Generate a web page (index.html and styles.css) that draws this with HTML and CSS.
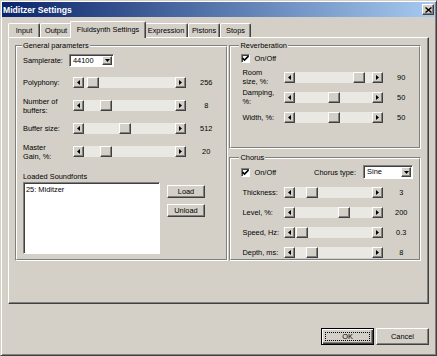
FILE: index.html
```html
<!DOCTYPE html>
<html>
<head>
<meta charset="utf-8">
<link rel="stylesheet" href="styles.css">
</head>
<body>
<div class="window">
  <div class="titlebar">
    <span class="title">Miditzer Settings</span>
    <span class="close-btn"><svg width="7" height="6" viewBox="0 0 7 6"><path d="M0.5 0.5 L6.5 5.5 M6.5 0.5 L0.5 5.5" stroke="#000" stroke-width="1.4"/></svg></span>
  </div>
  <div class="body">
    <div class="tabs">
      <div class="tab w-input">Input</div>
      <div class="tab w-output">Output</div>
      <div class="tab active w-fluid">Fluidsynth Settings</div>
      <div class="tab w-expr">Expression</div>
      <div class="tab w-pist">Pistons</div>
      <div class="tab w-stops">Stops</div>
    </div>
    <div class="panel">
      <div class="group gen">
        <div class="group-in">
          <div class="group-title t-gen">General parameters</div>
          <div class="gen-body">
            <div class="row first">
              <div class="lbl-sr">Samplerate:</div>
              <div class="combo sr-combo"><span class="combo-text">44100</span><span class="combo-btn"><svg width="5" height="3" viewBox="0 0 5 3"><polygon points="0,0 5,0 2.5,3" fill="#000"/></svg></span></div>
            </div>
            <div class="row">
              <div class="lbl">Polyphony:</div>
              <div class="slider"><span class="sb-btn"><svg width="3" height="5" viewBox="0 0 3 5"><polygon points="3,0 0,2.5 3,5" fill="#000"/></svg></span><span class="track"><span class="thumb" style="margin-left:3px"></span></span><span class="sb-btn"><svg width="3" height="5" viewBox="0 0 3 5"><polygon points="0,0 3,2.5 0,5" fill="#000"/></svg></span></div>
              <div class="val">256</div>
            </div>
            <div class="row">
              <div class="lbl">Number of<br>buffers:</div>
              <div class="slider"><span class="sb-btn"><svg width="3" height="5" viewBox="0 0 3 5"><polygon points="3,0 0,2.5 3,5" fill="#000"/></svg></span><span class="track"><span class="thumb" style="margin-left:16px"></span></span><span class="sb-btn"><svg width="3" height="5" viewBox="0 0 3 5"><polygon points="0,0 3,2.5 0,5" fill="#000"/></svg></span></div>
              <div class="val">8</div>
            </div>
            <div class="row">
              <div class="lbl">Buffer size:</div>
              <div class="slider"><span class="sb-btn"><svg width="3" height="5" viewBox="0 0 3 5"><polygon points="3,0 0,2.5 3,5" fill="#000"/></svg></span><span class="track"><span class="thumb" style="margin-left:35px"></span></span><span class="sb-btn"><svg width="3" height="5" viewBox="0 0 3 5"><polygon points="0,0 3,2.5 0,5" fill="#000"/></svg></span></div>
              <div class="val">512</div>
            </div>
            <div class="row">
              <div class="lbl">Master<br>Gain, %:</div>
              <div class="slider"><span class="sb-btn"><svg width="3" height="5" viewBox="0 0 3 5"><polygon points="3,0 0,2.5 3,5" fill="#000"/></svg></span><span class="track"><span class="thumb" style="margin-left:16px"></span></span><span class="sb-btn"><svg width="3" height="5" viewBox="0 0 3 5"><polygon points="0,0 3,2.5 0,5" fill="#000"/></svg></span></div>
              <div class="val">20</div>
            </div>
            <div class="sf-label">Loaded Soundfonts</div>
            <div class="sf-row">
              <div class="listbox"><div class="list-item">25: Miditzer</div></div>
              <div class="sf-buttons">
                <div class="btn small">Load</div>
                <div class="btn small">Unload</div>
              </div>
            </div>
          </div>
        </div>
      </div>
      <div class="right-col">
        <div class="group side">
          <div class="group-in">
            <div class="group-title t-side">Reverberation</div>
            <div class="side-body">
              <div class="row check-row rev-check">
                <span class="checkbox"><svg width="7" height="7" viewBox="0 0 7 7"><path d="M0.5 3 L2.5 5 L6.5 1" stroke="#000" stroke-width="1.6" fill="none"/></svg></span>
                <span class="check-label">On/Off</span>
              </div>
              <div class="row srow">
                <div class="slbl">Room<br>size, %:</div>
                <div class="slider sslider"><span class="sb-btn"><svg width="3" height="5" viewBox="0 0 3 5"><polygon points="3,0 0,2.5 3,5" fill="#000"/></svg></span><span class="track"><span class="thumb" style="margin-left:58px"></span></span><span class="sb-btn"><svg width="3" height="5" viewBox="0 0 3 5"><polygon points="0,0 3,2.5 0,5" fill="#000"/></svg></span></div>
                <div class="val">90</div>
              </div>
              <div class="row srow">
                <div class="slbl">Damping,<br>%:</div>
                <div class="slider sslider"><span class="sb-btn"><svg width="3" height="5" viewBox="0 0 3 5"><polygon points="3,0 0,2.5 3,5" fill="#000"/></svg></span><span class="track"><span class="thumb" style="margin-left:33px"></span></span><span class="sb-btn"><svg width="3" height="5" viewBox="0 0 3 5"><polygon points="0,0 3,2.5 0,5" fill="#000"/></svg></span></div>
                <div class="val">50</div>
              </div>
              <div class="row srow">
                <div class="slbl">Width, %:</div>
                <div class="slider sslider"><span class="sb-btn"><svg width="3" height="5" viewBox="0 0 3 5"><polygon points="3,0 0,2.5 3,5" fill="#000"/></svg></span><span class="track"><span class="thumb" style="margin-left:33px"></span></span><span class="sb-btn"><svg width="3" height="5" viewBox="0 0 3 5"><polygon points="0,0 3,2.5 0,5" fill="#000"/></svg></span></div>
                <div class="val">50</div>
              </div>
            </div>
          </div>
        </div>
        <div class="group side">
          <div class="group-in">
            <div class="group-title t-side">Chorus</div>
            <div class="side-body">
              <div class="row check-row chorus-check">
                <span class="checkbox"><svg width="7" height="7" viewBox="0 0 7 7"><path d="M0.5 3 L2.5 5 L6.5 1" stroke="#000" stroke-width="1.6" fill="none"/></svg></span>
                <span class="check-label">On/Off</span>
                <span class="ctype-label">Chorus type:</span>
                <div class="combo ct-combo"><span class="combo-text">Sine</span><span class="combo-btn"><svg width="5" height="3" viewBox="0 0 5 3"><polygon points="0,0 5,0 2.5,3" fill="#000"/></svg></span></div>
              </div>
              <div class="chorus-rows">
                <div class="row srow">
                  <div class="slbl">Thickness:</div>
                  <div class="slider sslider"><span class="sb-btn"><svg width="3" height="5" viewBox="0 0 3 5"><polygon points="3,0 0,2.5 3,5" fill="#000"/></svg></span><span class="track"><span class="thumb" style="margin-left:11px"></span></span><span class="sb-btn"><svg width="3" height="5" viewBox="0 0 3 5"><polygon points="0,0 3,2.5 0,5" fill="#000"/></svg></span></div>
                  <div class="val">3</div>
                </div>
                <div class="row srow">
                  <div class="slbl">Level, %:</div>
                  <div class="slider sslider"><span class="sb-btn"><svg width="3" height="5" viewBox="0 0 3 5"><polygon points="3,0 0,2.5 3,5" fill="#000"/></svg></span><span class="track"><span class="thumb" style="margin-left:43px"></span></span><span class="sb-btn"><svg width="3" height="5" viewBox="0 0 3 5"><polygon points="0,0 3,2.5 0,5" fill="#000"/></svg></span></div>
                  <div class="val">200</div>
                </div>
                <div class="row srow">
                  <div class="slbl">Speed, Hz:</div>
                  <div class="slider sslider"><span class="sb-btn"><svg width="3" height="5" viewBox="0 0 3 5"><polygon points="3,0 0,2.5 3,5" fill="#000"/></svg></span><span class="track"><span class="thumb" style="margin-left:1px"></span></span><span class="sb-btn"><svg width="3" height="5" viewBox="0 0 3 5"><polygon points="0,0 3,2.5 0,5" fill="#000"/></svg></span></div>
                  <div class="val">0.3</div>
                </div>
                <div class="row srow">
                  <div class="slbl">Depth, ms:</div>
                  <div class="slider sslider"><span class="sb-btn"><svg width="3" height="5" viewBox="0 0 3 5"><polygon points="3,0 0,2.5 3,5" fill="#000"/></svg></span><span class="track"><span class="thumb" style="margin-left:11px"></span></span><span class="sb-btn"><svg width="3" height="5" viewBox="0 0 3 5"><polygon points="0,0 3,2.5 0,5" fill="#000"/></svg></span></div>
                  <div class="val">8</div>
                </div>
              </div>
            </div>
          </div>
        </div>
      </div>
    </div>
    <div class="dialog-buttons">
      <div class="btn big default"><span class="focus">OK</span></div>
      <div class="btn big">Cancel</div>
    </div>
  </div>
</div>
</body>
</html>
```

FILE: styles.css
```css
* { box-sizing: border-box; }
html, body { margin: 0; padding: 0; }
body {
  width: 437px;
  height: 356px;
  overflow: hidden;
  background: #D4D0C8;
  font-family: "Liberation Sans", Arial, sans-serif;
  font-size: 7.4px;
  line-height: 9px;
  color: #000;
}
.window {
  width: 437px;
  height: 356px;
  border: 1px solid;
  border-color: #D4D0C8 #404040 #404040 #D4D0C8;
  box-shadow: inset 1px 1px #fff, inset -1px -1px #808080;
  padding: 1px;
  display: flex;
  flex-direction: column;
}
.titlebar {
  height: 15px;
  flex-shrink: 0;
  background: linear-gradient(to right, #0A246A, #A6CAF0);
  display: flex;
  align-items: center;
  justify-content: space-between;
  padding: 0 1px 0 1px;
}
.title {
  color: #fff;
  font-weight: bold;
  font-size: 8.6px;
  line-height: 10px;
}
.close-btn {
  width: 12px;
  height: 11px;
  background: #D4D0C8;
  border: 1px solid;
  border-color: #fff #404040 #404040 #fff;
  box-shadow: inset -1px -1px #808080;
  display: flex;
  align-items: center;
  justify-content: center;
}
.close-btn svg { display: block; }
.body {
  flex: 1;
  padding: 4px 6px 0 6px;
  display: flex;
  flex-direction: column;
}
/* tabs */
.tabs {
  display: flex;
  align-items: flex-end;
  height: 16px;
  position: relative;
  z-index: 1;
}
.tab {
  height: 14px;
  border-top: 1px solid #fff;
  border-left: 1px solid #fff;
  border-right: 1px solid #404040;
  box-shadow: inset -1px 0 #808080;
  border-top-left-radius: 2px;
  border-top-right-radius: 2px;
  background: #D4D0C8;
  display: flex;
  align-items: center;
  justify-content: center;
  white-space: nowrap;
}
.w-input { width: 32px; }
.w-output { width: 32px; }
.w-fluid { width: 76px; }
.w-expr { width: 44px; }
.w-pist { width: 32px; }
.w-stops { width: 31px; }
.tab.active {
  height: 17px;
  margin: 0 -2px -1px -2px;
  position: relative;
  z-index: 2;
  padding-bottom: 2px;
}
/* panel */
.panel {
  height: 267px;
  flex-shrink: 0;
  border: 1px solid;
  border-color: #fff #404040 #404040 #fff;
  box-shadow: inset -1px -1px #808080;
  padding: 7px 7px 0 6px;
  display: flex;
  gap: 1px;
}
.group {
  border: 1px solid;
  border-color: #808080 #fff #fff #808080;
}
.group-in {
  height: 100%;
  border: 1px solid;
  border-color: #fff #808080 #808080 #fff;
}
.group-title {
  width: fit-content;
  margin-top: -6px;
  padding: 0 1px;
  background: #D4D0C8;
  line-height: 9px;
}
.t-gen { margin-left: 5px; }
.t-side { margin-left: 8px; }
.gen { width: 214px; height: 216px; }
.gen-body { padding-left: 6px; }
.row { display: flex; align-items: center; }
.gen .row { height: 23px; }
.gen .row.first { height: 21px; }
.lbl-sr { width: 46px; }
.lbl { width: 50px; }
.val { flex: 1; text-align: center; }
/* scrollbar-like slider */
.slider { display: flex; height: 11px; flex-shrink: 0; }
.gen .slider { width: 113px; }
.sb-btn, .thumb, .combo-btn, .btn {
  background: #D4D0C8;
  border: 1px solid;
  border-color: #fff #404040 #404040 #fff;
  box-shadow: inset -1px -1px #808080;
}
.sb-btn {
  width: 11px;
  height: 11px;
  flex-shrink: 0;
  display: flex;
  align-items: center;
  justify-content: center;
}
.sb-btn svg, .combo-btn svg, .checkbox svg { display: block; }
.track {
  flex: 1;
  display: flex;
  background: #EAE8E3;
}
.thumb {
  width: 12px;
  height: 11px;
  flex-shrink: 0;
}
/* combo */
.combo {
  display: flex;
  flex-shrink: 0;
  background: #fff;
  border: 1px solid;
  border-color: #808080 #fff #fff #808080;
  box-shadow: inset 1px 1px #404040;
  padding: 1px 1px 1px 1px;
}
.combo-text { flex: 1; padding-left: 2px; line-height: 9px; }
.combo-btn {
  width: 10px;
  display: flex;
  align-items: center;
  justify-content: center;
}
.sr-combo { width: 45px; height: 13px; }
.ct-combo { width: 50px; height: 14px; }
/* soundfonts */
.sf-label { margin-top: 9px; height: 9px; }
.sf-row { margin-top: 1px; display: flex; }
.listbox {
  width: 137px;
  height: 72px;
  background: #fff;
  border: 1px solid;
  border-color: #808080 #fff #fff #808080;
  box-shadow: inset 1px 1px #404040;
  padding: 2px 2px;
}
.sf-buttons {
  margin-left: 7px;
  padding-top: 3px;
  display: flex;
  flex-direction: column;
  gap: 6px;
}
.btn {
  display: flex;
  align-items: center;
  justify-content: center;
}
.btn.small { width: 38px; height: 13px; }
/* side groups */
.right-col {
  width: 192px;
  display: flex;
  flex-direction: column;
  gap: 8px;
}
.side { height: 104px; }
.side-body { padding-left: 11px; }
.rev-check { height: 17px; }
.srow { height: 20px; }
.slbl { width: 42px; }
.sslider { width: 99px; }
.checkbox {
  width: 9px;
  height: 9px;
  flex-shrink: 0;
  margin-left: -1px;
  background: #fff;
  border: 1px solid;
  border-color: #808080 #fff #fff #808080;
  box-shadow: inset 1px 1px #404040;
  display: flex;
  align-items: center;
  justify-content: center;
}
.check-label { margin-left: 4px; }
.chorus-check { height: 14px; margin-top: 3px; }
.ctype-label { margin-left: 38px; width: 49px; flex-shrink: 0; }
.chorus-rows { padding-top: 3px; }
/* dialog buttons */
.dialog-buttons {
  margin-top: 24px;
  display: flex;
  justify-content: flex-end;
  gap: 2px;
}
.btn.big { width: 53px; height: 17px; }
.btn.default {
  border-color: #000;
  box-shadow: inset 1px 1px #fff, inset -1px -1px #404040, inset -2px -2px #808080;
  padding: 3px;
}
.focus {
  flex: 1;
  align-self: stretch;
  border: 1px dotted #000;
  display: flex;
  align-items: center;
  justify-content: center;
}
```
